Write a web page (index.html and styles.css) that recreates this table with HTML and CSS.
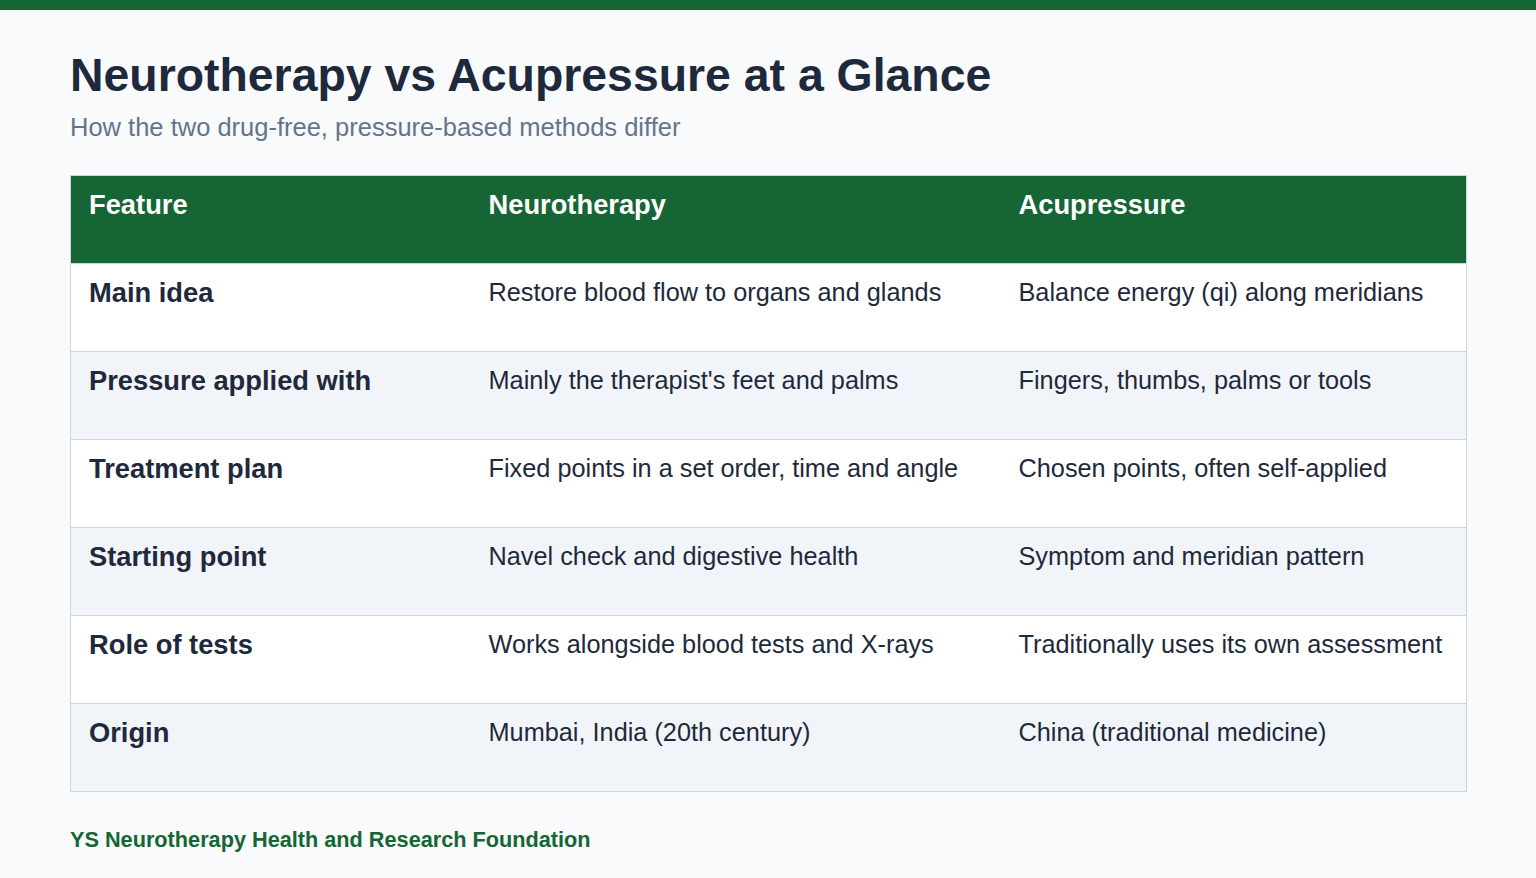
FILE: index.html
```html
<!DOCTYPE html>
<html lang="en">
<head>
<meta charset="utf-8">
<title>Neurotherapy vs Acupressure at a Glance</title>
<link rel="stylesheet" href="styles.css">
</head>
<body>
<div class="topbar"></div>
<main class="page">
  <h1 class="title">Neurotherapy vs Acupressure at a Glance</h1>
  <p class="subtitle">How the two drug-free, pressure-based methods differ</p>
  <table class="compare">
    <colgroup>
      <col class="c1"><col class="c2"><col class="c3">
    </colgroup>
    <thead>
      <tr><th>Feature</th><th>Neurotherapy</th><th>Acupressure</th></tr>
    </thead>
    <tbody>
      <tr><td class="feat">Main idea</td><td>Restore blood flow to organs and glands</td><td>Balance energy (qi) along meridians</td></tr>
      <tr><td class="feat">Pressure applied with</td><td>Mainly the therapist's feet and palms</td><td>Fingers, thumbs, palms or tools</td></tr>
      <tr><td class="feat">Treatment plan</td><td>Fixed points in a set order, time and angle</td><td>Chosen points, often self-applied</td></tr>
      <tr><td class="feat">Starting point</td><td>Navel check and digestive health</td><td>Symptom and meridian pattern</td></tr>
      <tr><td class="feat">Role of tests</td><td>Works alongside blood tests and X-rays</td><td>Traditionally uses its own assessment</td></tr>
      <tr><td class="feat">Origin</td><td>Mumbai, India (20th century)</td><td>China (traditional medicine)</td></tr>
    </tbody>
  </table>
  <p class="footer">YS Neurotherapy Health and Research Foundation</p>
</main>
</body>
</html>
```
FILE: styles.css
```css
* { box-sizing: border-box; }
html, body {
  margin: 0;
  padding: 0;
  background: #f8fafc;
  font-family: "Liberation Sans", Arial, sans-serif;
  color: #1e293b;
}
.topbar {
  height: 10px;
  background: #166534;
}
.page {
  padding: 38px 69px 0 70px;
}
.title {
  margin: 0;
  font-size: 46.4px;
  line-height: 1.2;
  font-weight: 700;
  color: #1e293b;
}
.subtitle {
  margin: 8px 0 0;
  font-size: 25.5px;
  line-height: 1.2;
  color: #64748b;
}
.compare {
  margin-top: 33px;
  width: 100%;
  border-collapse: collapse;
  table-layout: fixed;
  border: 1px solid #cbd5e1;
}
.c1 { width: 400px; }
.c2 { width: 530px; }
.compare th,
.compare td {
  height: 88px;
  padding: 13px 18px 0;
  vertical-align: top;
  text-align: left;
  line-height: 1.2;
  border-bottom: 1px solid #cbd5e1;
}
.compare th {
  background: #166534;
  color: #ffffff;
  font-size: 27.3px;
  font-weight: 700;
}
.compare td {
  font-size: 25.3px;
  padding-top: 13px;
}
.compare td.feat {
  font-size: 27.3px;
  font-weight: 700;
  padding-top: 13px;
}
.compare tbody tr:nth-child(odd) { background: #ffffff; }
.compare tbody tr:nth-child(even) { background: #f1f5f9; }
.footer {
  margin: 35px 0 0;
  font-size: 21.7px;
  line-height: 1.2;
  font-weight: 700;
  color: #166534;
}
```
